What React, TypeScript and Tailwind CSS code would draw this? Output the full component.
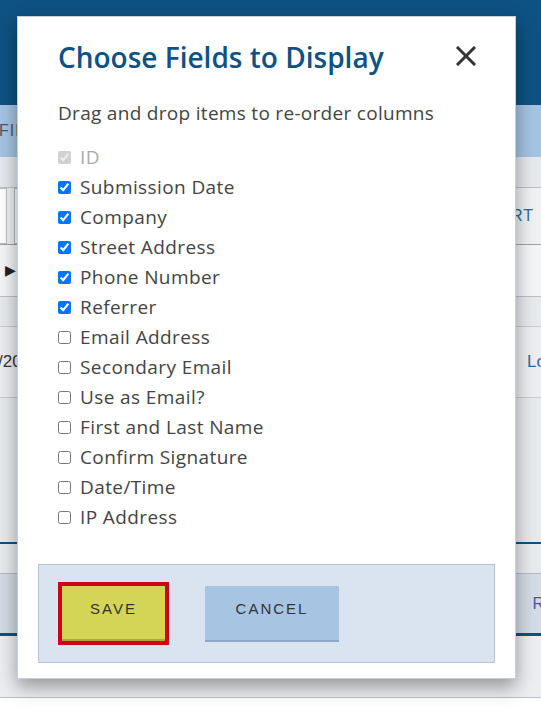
import React from "react";

const fields: { label: string; checked: boolean; disabled?: boolean }[] = [
  { label: "ID", checked: true, disabled: true },
  { label: "Submission Date", checked: true },
  { label: "Company", checked: true },
  { label: "Street Address", checked: true },
  { label: "Phone Number", checked: true },
  { label: "Referrer", checked: true },
  { label: "Email Address", checked: false },
  { label: "Secondary Email", checked: false },
  { label: "Use as Email?", checked: false },
  { label: "First and Last Name", checked: false },
  { label: "Confirm Signature", checked: false },
  { label: "Date/Time", checked: false },
  { label: "IP Address", checked: false },
];

function Background() {
  return (
    <div className="flex flex-col w-full h-full bg-[#e9ecf0] font-['Liberation_Sans',sans-serif]">
      <div className="h-[105px] bg-[#0e5283] shrink-0" />
      <div className="h-[52px] bg-[#a5c4e3] shrink-0 flex items-center justify-between">
        <span className="text-[16px] tracking-[1px] text-[#555] ml-[-1px]">FIELDS</span>
      </div>
      <div className="h-[31px] bg-[#e6e9ed] border-b border-[#b9c2cc] shrink-0" />
      <div className="h-[57px] bg-[#f0f1f3] shrink-0 flex items-center justify-between border-b border-[#9aa4ae]">
        <div className="flex h-full gap-[7px] pl-0">
          <div className="w-[7px] h-full bg-white border border-[#bbb] border-l-0" />
          <div className="w-[10px] h-full bg-white border border-[#bbb]" />
        </div>
        <span className="text-[16px] text-[#2a6aa0] tracking-[1px] mr-[7px]">SORT</span>
      </div>
      <div className="h-[52px] bg-[#f4f5f6] shrink-0 flex items-center border-b border-[#b9c2cc]">
        <span className="text-[14px] text-[#222] ml-[5px]">▶</span>
      </div>
      <div className="h-[30px] bg-[#e8ebee] shrink-0 border-b border-[#c5ccd3]" />
      <div className="h-[71px] bg-[#eceef1] shrink-0 flex items-center justify-between border-b border-[#c5ccd3]">
        <span className="text-[17px] text-[#333] ml-[-2px]">/20</span>
        <span className="text-[17px] text-[#2a6aa0] mr-[-5px]">Lo</span>
      </div>
      <div className="h-[146px] bg-[#e8ebee] shrink-0 border-b-2 border-[#0e5283]" />
      <div className="h-[30px] bg-[#e9ecef] shrink-0 border-b border-[#b3bcc6]" />
      <div className="h-[62px] bg-[#d3dce7] shrink-0 flex items-center justify-end border-b-[3px] border-[#0e5283]">
        <span className="text-[16px] text-[#2a6aa0] mr-[-12px]">Re</span>
      </div>
      <div className="h-[62px] bg-[#eceef1] shrink-0 border-b border-[#b9c2cc]" />
      <div className="flex-1 bg-white" />
    </div>
  );
}

export default function App() {
  return (
    <div className="relative w-[541px] h-[709px] overflow-hidden">
      <Background />
      <div className="absolute left-[17px] top-[16px] w-[499px] h-[663px] bg-white border border-[#c3cfdc] shadow-[0_8px_18px_rgba(0,0,0,0.38)] font-['Open_Sans',sans-serif] flex flex-col">
        <div className="flex items-center justify-between pl-[40px] pr-[40px] pt-[21px]">
          <h2 className="text-[28px] leading-[38px] font-semibold text-[#0e5283] tracking-[0px]">
            Choose Fields to Display
          </h2>
          <button className="w-[22px] h-[22px] flex items-center justify-center text-[#333] mr-[-2px] mb-[3px]" aria-label="Close">
            <svg width="20" height="20" viewBox="0 0 20 20">
              <path d="M2 2 L18 18 M18 2 L2 18" stroke="#333" strokeWidth="3" strokeLinecap="square" />
            </svg>
          </button>
        </div>
        <p className="pl-[40px] mt-[25px] text-[19px] leading-[24px] text-[#444] tracking-[0.3px]">
          Drag and drop items to re-order columns
        </p>
        <ul className="pl-[40px] mt-[17px] flex flex-col">
          {fields.map((f) => (
            <li key={f.label} className="h-[30px] flex items-center">
              <input
                type="checkbox"
                defaultChecked={f.checked}
                disabled={f.disabled}
                className="w-[13px] h-[13px] m-0 shrink-0"
              />
              <span
                className={`ml-[9px] text-[19px] tracking-[0.4px] ${
                  f.disabled ? "text-[#aaa]" : "text-[#444]"
                }`}
              >
                {f.label}
              </span>
            </li>
          ))}
        </ul>
        <div className="mx-[20px] mt-[32px] h-[99px] bg-[#dae4f0] border border-[#b3c3d6] flex items-center pl-[23px] gap-[40px]">
          <button className="w-[103px] h-[55px] pb-[6px] bg-[#d4d556] border-b-2 border-[#a9aa3e] outline-[4px] outline outline-[#d0021b] text-[15px] tracking-[2px] text-[#333] font-['Liberation_Sans',sans-serif]">
            SAVE
          </button>
          <button className="w-[134px] h-[56px] pb-[6px] bg-[#a7c5e3] border-b-2 border-[#8ca8c6] text-[15px] tracking-[2px] text-[#333] font-['Liberation_Sans',sans-serif]">
            CANCEL
          </button>
        </div>
      </div>
    </div>
  );
}
